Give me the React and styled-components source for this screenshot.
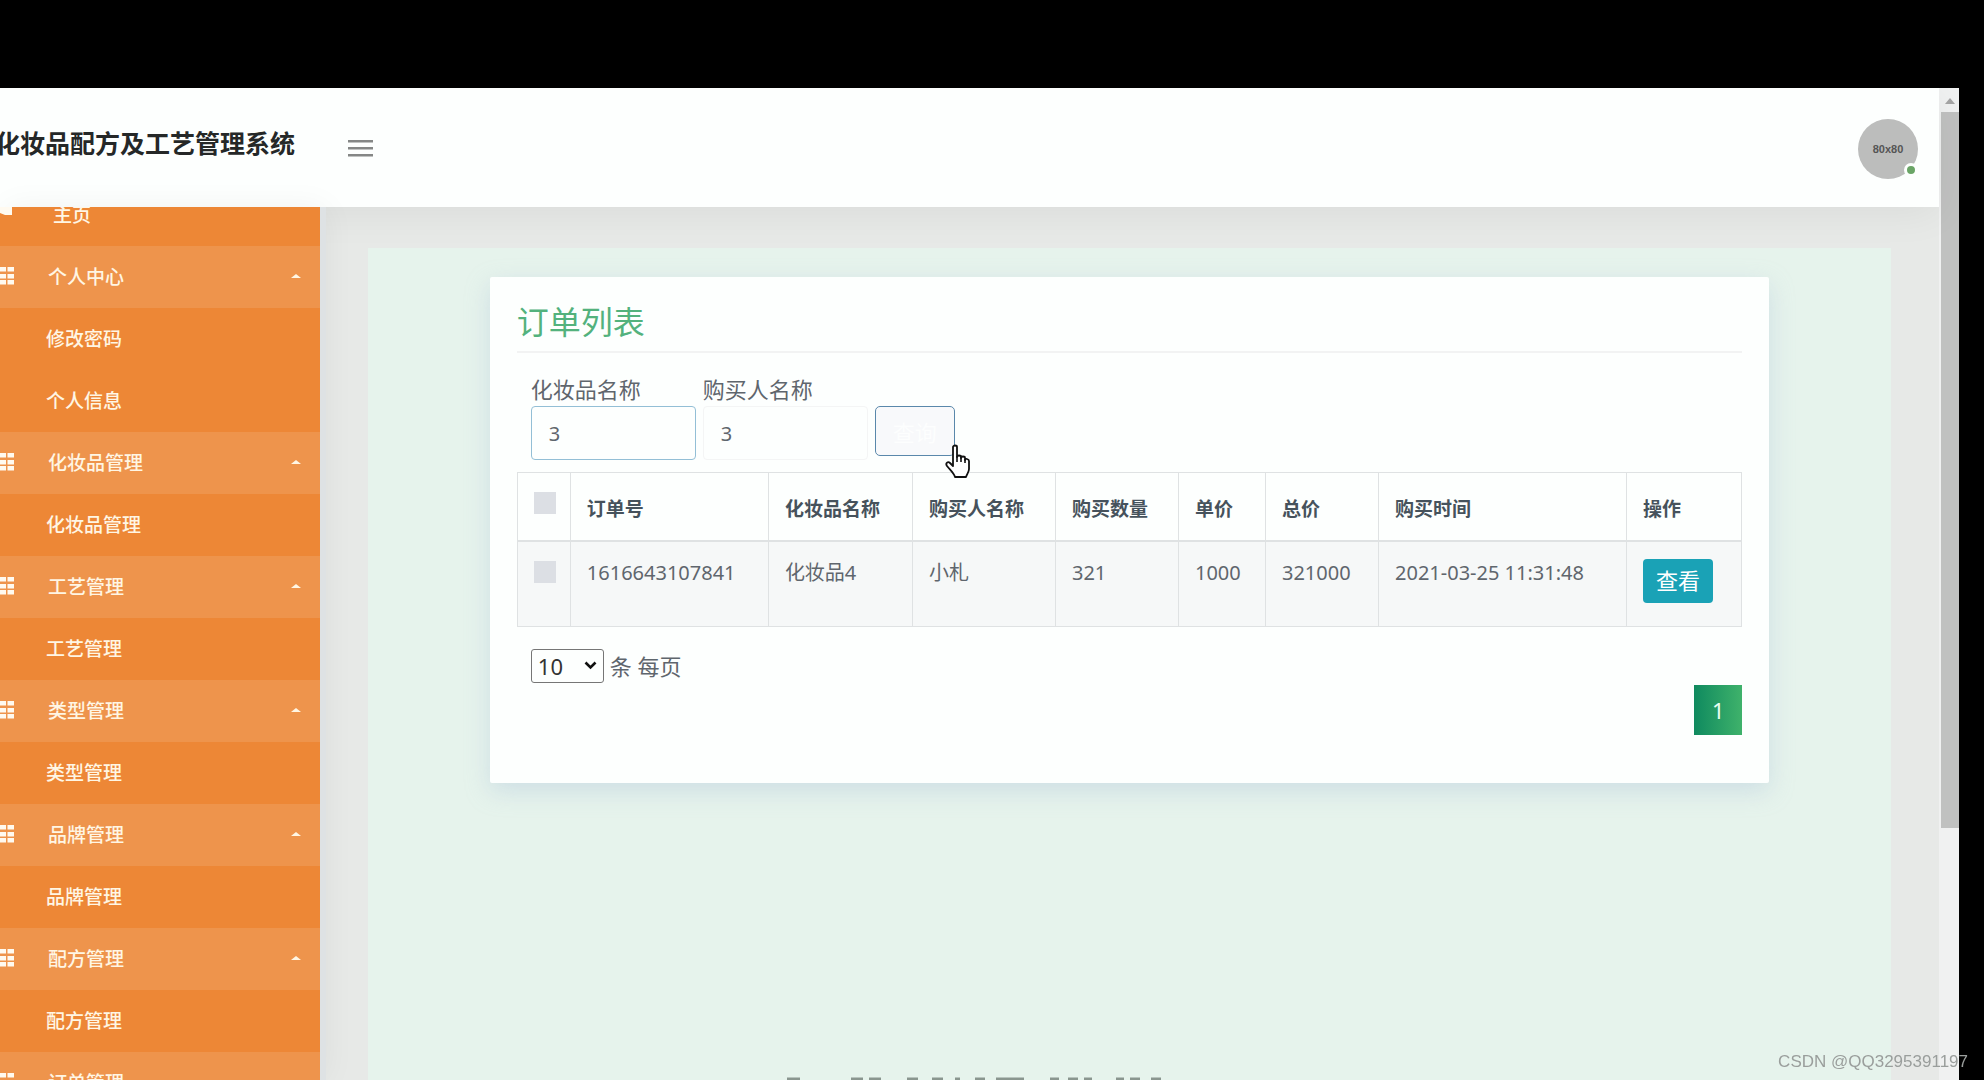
import React, { useState } from "react";
import styled, { createGlobalStyle } from "styled-components";

const GlobalStyle = createGlobalStyle`
  * {
    box-sizing: border-box;
  }

  body {
    margin: 0;
    background: #000;
    color: #5f666d;
    font-family: "Noto Sans", "Noto Sans CJK SC", sans-serif;
    font-size: 19px;
  }

  button,
  input,
  select {
    font-family: inherit;
  }
`;

const Screen = styled.div`
  height: 100vh;
  padding: 88px 25px 0 0;
  display: flex;
  overflow: hidden;
`;

const Page = styled.div`
  flex: 1;
  min-width: 0;
  display: flex;
  flex-direction: column;
  background: #e7e9e7;
`;

const Header = styled.header`
  flex: none;
  height: 119px;
  padding-right: 21px;
  display: flex;
  align-items: center;
  background: #fdfffe;
  box-shadow: 0 6px 40px rgba(0, 0, 0, 0.06);
  z-index: 1;
`;

const Brand = styled.div`
  width: 295px;
  padding-bottom: 10px;
  display: flex;
  justify-content: flex-end;
  color: #252828;
  font-size: 25px;
  line-height: 36px;
  font-weight: 700;
  white-space: nowrap;
`;

const MenuButton = styled.button`
  margin-left: 53px;
  padding: 0;
  border: 0;
  background: none;
  display: flex;
  cursor: pointer;
`;

const Avatar = styled.div`
  position: relative;
  width: 60px;
  height: 60px;
  margin: 2px 0 0 auto;
  border-radius: 50%;
  background: #bcbdbc;
  color: #555;
  font-family: "Liberation Sans", sans-serif;
  font-size: 11px;
  font-weight: 700;
  line-height: 60px;
  text-align: center;
`;

const Status = styled.span`
  position: absolute;
  right: 0;
  bottom: 2px;
  width: 14px;
  height: 14px;
  border: 3px solid #fdfffe;
  border-radius: 50%;
  background: #6aa566;
`;

const Body = styled.div`
  flex: 1;
  min-height: 0;
  display: flex;
`;

const Sidebar = styled.nav`
  flex: none;
  width: 320px;
  overflow: hidden;
  background: #ed8736;
  box-shadow: 6px 0 0 #dee2e4, 6px 0 30px rgba(0, 0, 0, 0.05);
  z-index: 2;
`;

/* the list is scrolled up a little under the header */
const MenuList = styled.div`
  margin-top: -23px;
`;

const MenuItem = styled.a`
  height: 62px;
  padding: 0 19px 2px ${(props) => (props.$group ? "0" : "46px")};
  display: flex;
  align-items: center;
  background: ${(props) => (props.$group ? "#ee944c" : "#ed8736")};
  color: #fff6e4;
  font-size: 19px;
  font-weight: 500;
  text-decoration: none;
`;

const HomeItem = styled(MenuItem)`
  padding-left: 0;
`;

const MenuIcon = styled.svg`
  flex: none;
  width: 48px;
  height: 18px;
  fill: #fffaf0;
`;

const HomeIcon = styled(MenuIcon)`
  width: 53px;
`;

const MenuText = styled.span`
  flex: 1;
`;

const Main = styled.main`
  flex: 1;
  min-width: 0;
  padding: 41px 48px 0;
  display: flex;
`;

const Panel = styled.div`
  flex: 1;
  min-width: 0;
  padding: 29px 8% 0;
  background: #e6f3ec;
`;

const Card = styled.section`
  padding: 22px 27px 48px;
  border-radius: 2px;
  background: #fdfffe;
  box-shadow: 0 8px 24px rgba(160, 185, 215, 0.35);
`;

const Title = styled.h1`
  margin: 0 0 10px;
  padding-bottom: 6px;
  border-bottom: 2px solid #f2f3f3;
  color: #53b27d;
  font-size: 32px;
  font-weight: 400;
  line-height: 46px;
`;

const SearchForm = styled.form`
  padding: 10px 14px 12px;
  display: flex;
  align-items: flex-end;
  gap: 7px;
`;

const Field = styled.label`
  width: 165px;
  display: flex;
  flex-direction: column;
  font-size: 22px;
  line-height: 33px;
`;

const TextInput = styled.input`
  width: 100%;
  height: 54px;
  padding: 0 17px;
  border: 1px solid #f4f5f5;
  border-radius: 4px;
  outline: 0;
  background: #fdfffe;
  color: #5f666d;
  font-size: 20px;

  ${(props) => props.$active && "border-color: #93bfd6;"}
`;

const ButtonWrap = styled.div`
  position: relative;
  display: flex;
`;

const SearchButton = styled.button`
  width: 80px;
  height: 50px;
  margin-bottom: 4px;
  padding: 0;
  border: 1px solid #5a88ab;
  border-radius: 5px;
  background: #f8f9fb;
  color: #fdfefe;
  font-size: 22px;
  cursor: pointer;
`;

const Pointer = styled.svg`
  position: absolute;
  left: 69px;
  top: 38px;
  width: 27px;
  height: 36px;
  pointer-events: none;
`;

const Table = styled.table`
  width: 100%;
  table-layout: fixed;
  border-collapse: collapse;
`;

const Th = styled.th`
  height: 68px;
  padding: 4px 16px 0;
  border: 1px solid #dfe2e3;
  border-bottom-width: 2px;
  color: #46525c;
  font-weight: 700;
  text-align: left;
  white-space: nowrap;
`;

const Td = styled.td`
  height: 86px;
  padding: 17px 16px 0;
  border: 1px solid #dfe2e3;
  background: #f6f8f8;
  font-size: 20px;
  line-height: 28px;
  vertical-align: top;
  white-space: nowrap;
`;

const Check = styled.input`
  display: block;
  appearance: none;
  width: 22px;
  height: 22px;
  margin: ${(props) => (props.$head ? "0 0 10px" : "2px 0 0")};
  background: #dcdfe4;
`;

const ViewButton = styled.button`
  width: 70px;
  height: 44px;
  padding: 0 0 2px;
  border: 0;
  border-radius: 4px;
  background: #1aa2b6;
  color: #fff;
  font-size: 22px;
  line-height: 42px;
  cursor: pointer;
`;

const PageSize = styled.label`
  padding: 22px 14px 0;
  display: flex;
  align-items: center;
  gap: 6px;
  font-size: 22px;
  line-height: 34px;
`;

const SelectWrap = styled.span`
  position: relative;
  display: flex;
`;

const Select = styled.select`
  appearance: none;
  width: 73px;
  height: 34px;
  padding: 0 6px;
  border: 1px solid #767676;
  border-radius: 3px;
  background: #fdfffe;
  color: #333;
  font-size: 22px;
`;

const SelectArrow = styled.svg`
  position: absolute;
  right: 7px;
  top: 12px;
  width: 13px;
  height: 9px;
  pointer-events: none;
`;

const Pagination = styled.div`
  padding-top: 2px;
  display: flex;
  justify-content: flex-end;
`;

const PageLink = styled.a`
  width: 48px;
  height: 50px;
  background: linear-gradient(90deg, #0f8a5f, #3fb26b);
  color: #e8fff2;
  font-size: 22px;
  line-height: 50px;
  text-align: center;
  text-decoration: none;
`;

const ScrollBar = styled.div`
  flex: none;
  width: 20px;
  padding-left: 2px;
  display: flex;
  flex-direction: column;
  background: #f0f1f1;
`;

const ScrollUp = styled.svg`
  flex: none;
  width: 18px;
  height: 24px;
  fill: #a5a5a5;
`;

const ScrollTrack = styled.div`
  flex: 1;
`;

const ScrollThumb = styled.div`
  height: 74%;
  background: #c0c1c0;
`;

const Watermark = styled.div`
  position: fixed;
  right: 16px;
  bottom: 8px;
  color: #9a9e9c;
  font-family: "Liberation Sans", sans-serif;
  font-size: 17px;
  line-height: 20px;
`;

const Caption = styled.svg`
  position: fixed;
  left: 50%;
  bottom: 0;
  width: 380px;
  height: 4px;
  margin-left: -207px;
  fill: #8a968f;
`;

const groups = [
  { name: "个人中心", items: ["修改密码", "个人信息"] },
  { name: "化妆品管理", items: ["化妆品管理"] },
  { name: "工艺管理", items: ["工艺管理"] },
  { name: "类型管理", items: ["类型管理"] },
  { name: "品牌管理", items: ["品牌管理"] },
  { name: "配方管理", items: ["配方管理"] },
  { name: "订单管理", items: [] },
];

const columns = [
  { name: "订单号", width: 198 },
  { name: "化妆品名称", width: 144 },
  { name: "购买人名称", width: 143 },
  { name: "购买数量", width: 123 },
  { name: "单价", width: 87 },
  { name: "总价", width: 113 },
  { name: "购买时间", width: 248 },
  { name: "操作", width: 115 },
];

const orders = [
  [
    "1616643107841",
    "化妆品4",
    "小札",
    "321",
    "1000",
    "321000",
    "2021-03-25 11:31:48",
  ],
];

const captionMarks = [
  [2, 13], [66, 12], [84, 12], [122, 11], [147, 11], [170, 5], [190, 10],
  [211, 28], [265, 9], [283, 10], [299, 8], [331, 8], [345, 10], [366, 10],
];

const GridIcon = () => (
  <MenuIcon viewBox="0 0 48 18">
    {[0, 7, 13].map((y) => (
      <g key={y}>
        <rect x="0" y={y} width="6" height="4.5" />
        <rect x="7.5" y={y} width="6.5" height="4.5" />
      </g>
    ))}
  </MenuIcon>
);

const Caret = () => (
  <svg width="10" height="4" viewBox="0 0 10 4" fill="#fff6e4">
    <path d="M0 4 5 0l5 4z" />
  </svg>
);

const SideMenu = () => (
  <Sidebar>
    <MenuList>
      <HomeItem href="#">
        <HomeIcon viewBox="0 0 53 18">
          <path d="M0 0h12v10H5L0 8z" />
        </HomeIcon>
        <MenuText>主页</MenuText>
      </HomeItem>
      {groups.map((group) => (
        <React.Fragment key={group.name}>
          <MenuItem href="#" $group>
            <GridIcon />
            <MenuText>{group.name}</MenuText>
            <Caret />
          </MenuItem>
          {group.items.map((item) => (
            <MenuItem href="#" key={item}>
              {item}
            </MenuItem>
          ))}
        </React.Fragment>
      ))}
    </MenuList>
  </Sidebar>
);

const Search = () => {
  const [product, setProduct] = useState("3");
  const [buyer, setBuyer] = useState("3");

  return (
    <SearchForm onSubmit={(e) => e.preventDefault()}>
      <Field>
        化妆品名称
        <TextInput
          $active
          value={product}
          onChange={(e) => setProduct(e.target.value)}
        />
      </Field>
      <Field>
        购买人名称
        <TextInput value={buyer} onChange={(e) => setBuyer(e.target.value)} />
      </Field>
      <ButtonWrap>
        <SearchButton type="submit">查询</SearchButton>
        <Pointer viewBox="0 0 27 36">
          <path
            d="M9 3c0-2 4-2 4 0v10c0-2 4-2 4 0v1c0-2 4-2 4 0v2c0-2 4-1 4 1v8c0 3-2 5-3 8H11c-1-4-5-7-8-11-2-3 1-5 3-3l3 3z"
            fill="#fff"
            stroke="#111"
            strokeWidth="1.8"
            strokeLinejoin="round"
          />
          <path d="M13 12v6M17 13v5M21 15v4" stroke="#111" strokeWidth="1.6" />
        </Pointer>
      </ButtonWrap>
    </SearchForm>
  );
};

const OrderTable = () => (
  <Table>
    <colgroup>
      <col width="53" />
      {columns.map((column) => (
        <col key={column.name} width={column.width} />
      ))}
    </colgroup>
    <thead>
      <tr>
        <Th>
          <Check type="checkbox" aria-label="全选" $head />
        </Th>
        {columns.map((column) => (
          <Th key={column.name}>{column.name}</Th>
        ))}
      </tr>
    </thead>
    <tbody>
      {orders.map((order) => (
        <tr key={order[0]}>
          <Td>
            <Check type="checkbox" aria-label={order[0]} />
          </Td>
          {order.map((value) => (
            <Td key={value}>{value}</Td>
          ))}
          <Td>
            <ViewButton>查看</ViewButton>
          </Td>
        </tr>
      ))}
    </tbody>
  </Table>
);

const App = () => {
  return (
    <Screen>
      <GlobalStyle />
      <Page>
        <Header>
          <Brand>化妆品配方及工艺管理系统</Brand>
          <MenuButton aria-label="菜单">
            <svg width="25" height="18" viewBox="0 0 25 18" fill="#858786">
              <path d="M0 1h25v2.4H0zM0 8h25v2.4H0zM0 15h25v2.4H0z" />
            </svg>
          </MenuButton>
          <Avatar>
            80x80
            <Status />
          </Avatar>
        </Header>
        <Body>
          <SideMenu />
          <Main>
            <Panel>
              <Card>
                <Title>订单列表</Title>
                <Search />
                <OrderTable />
                <PageSize>
                  <SelectWrap>
                    <Select defaultValue="10">
                      <option>10</option>
                      <option>25</option>
                      <option>50</option>
                    </Select>
                    <SelectArrow viewBox="0 0 13 9">
                      <path
                        d="M1.5 1.5l5 5 5-5"
                        fill="none"
                        stroke="#111"
                        strokeWidth="2.6"
                      />
                    </SelectArrow>
                  </SelectWrap>
                  条 每页
                </PageSize>
                <Pagination>
                  <PageLink href="#">1</PageLink>
                </Pagination>
              </Card>
            </Panel>
          </Main>
        </Body>
      </Page>
      <ScrollBar>
        <ScrollUp viewBox="0 0 18 24">
          <path d="M4 16 9 10l5 6z" />
        </ScrollUp>
        <ScrollTrack>
          <ScrollThumb />
        </ScrollTrack>
      </ScrollBar>
      <Caption viewBox="0 0 380 4">
        {captionMarks.map(([x, width]) => (
          <rect key={x} x={x} y="1.5" width={width} height="2.5" />
        ))}
      </Caption>
      <Watermark>CSDN @QQ3295391197</Watermark>
    </Screen>
  );
};

export default App;
